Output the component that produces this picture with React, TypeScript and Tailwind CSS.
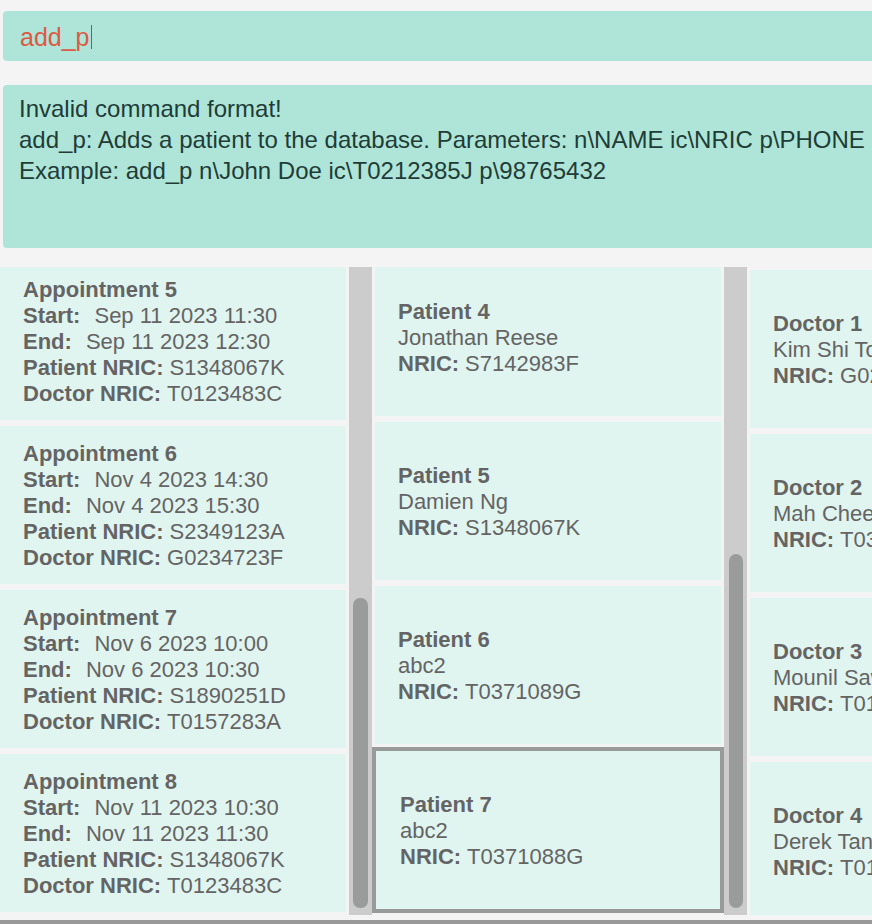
import React from "react";

type Appt = { n: number; start: string; end: string; p: string; d: string };
type Person = { title: string; name: string; nric: string; selected?: boolean };

const appts: Appt[] = [
  { n: 5, start: "Sep 11 2023 11:30", end: "Sep 11 2023 12:30", p: "S1348067K", d: "T0123483C" },
  { n: 6, start: "Nov 4 2023 14:30", end: "Nov 4 2023 15:30", p: "S2349123A", d: "G0234723F" },
  { n: 7, start: "Nov 6 2023 10:00", end: "Nov 6 2023 10:30", p: "S1890251D", d: "T0157283A" },
  { n: 8, start: "Nov 11 2023 10:30", end: "Nov 11 2023 11:30", p: "S1348067K", d: "T0123483C" },
];

const patients: Person[] = [
  { title: "Patient 4", name: "Jonathan Reese", nric: "S7142983F" },
  { title: "Patient 5", name: "Damien Ng", nric: "S1348067K" },
  { title: "Patient 6", name: "abc2", nric: "T0371089G" },
  { title: "Patient 7", name: "abc2", nric: "T0371088G", selected: true },
];

const doctors: Person[] = [
  { title: "Doctor 1", name: "Kim Shi Tong", nric: "G0234723F" },
  { title: "Doctor 2", name: "Mah Chee Hong", nric: "T0345678B" },
  { title: "Doctor 3", name: "Mounil Sawhney", nric: "T0123483C" },
  { title: "Doctor 4", name: "Derek Tan", nric: "T0157283A" },
];

const cardText = "text-[22px] leading-[26px] text-[#646464] whitespace-nowrap";

function ApptCell({ a }: { a: Appt }) {
  return (
    <div className="h-[164px] w-[352px] shrink-0 p-[3px]">
      <div className={`h-full bg-[#e1f5f0] flex flex-col justify-center pl-[23px] pt-[2px] ${cardText}`}>
        <div className="font-bold">Appointment {a.n}</div>
        <div>
          <span className="font-bold">Start:</span>
          <span className="ml-[14px]">{a.start}</span>
        </div>
        <div>
          <span className="font-bold">End:</span>
          <span className="ml-[14px]">{a.end}</span>
        </div>
        <div>
          <span className="font-bold">Patient NRIC:</span>
          <span className="ml-[6px]">{a.p}</span>
        </div>
        <div>
          <span className="font-bold">Doctor NRIC:</span>
          <span className="ml-[6px]">{a.d}</span>
        </div>
      </div>
    </div>
  );
}

function PersonCell({ p }: { p: Person }) {
  const inner = (
    <>
      <div className="font-bold">{p.title}</div>
      <div>{p.name}</div>
      <div>
        <span className="font-bold">NRIC:</span>
        <span className="ml-[6px]">{p.nric}</span>
      </div>
    </>
  );
  if (p.selected) {
    return (
      <div className="h-[166px] w-[352px] shrink-0 border-[4px] border-[#999b9a]">
        <div className={`h-full bg-[#e1f5f0] flex flex-col justify-center pl-[24px] pt-[2px] ${cardText}`}>{inner}</div>
      </div>
    );
  }
  return (
    <div className="h-[164px] w-[352px] shrink-0 p-[3px]">
      <div className={`h-full bg-[#e1f5f0] flex flex-col justify-center pl-[23px] pt-[2px] ${cardText}`}>{inner}</div>
    </div>
  );
}

function ScrollBar({ top, height, left, width }: { top: string; height: string; left: string; width: string }) {
  return (
    <div className="w-[23px] shrink-0 bg-[#cccccc] flex flex-col">
      <div className={top} />
      <div className={`${height} ${left} ${width} rounded-[7px] bg-[#999c9a]`} />
    </div>
  );
}

export default function App() {
  return (
    <div
      className="w-[872px] h-[924px] bg-[#f4f4f4] overflow-hidden flex flex-col"
      style={{ fontFamily: '"Liberation Sans", Arial, sans-serif' }}
    >
      <div className="mt-[11px] ml-[3px] w-[900px] h-[50px] shrink-0 rounded-[4px] bg-[#aee5d8] flex items-center pl-[17px] pt-[2px]">
        <span className="text-[25px] text-[#dc5a43] leading-none">add_p</span>
        <span className="ml-[1px] inline-block w-[1px] h-[24px] bg-[#b5483a]" />
      </div>

      <div className="mt-[24px] ml-[3px] w-[900px] h-[163px] shrink-0 rounded-[4px] bg-[#aee5d8] pt-[8px] pl-[16px] text-[24px] leading-[31px] text-[#1f3c37] whitespace-nowrap">
        <div>Invalid command format!</div>
        <div>add_p: Adds a patient to the database. Parameters: n\NAME ic\NRIC p\PHONE</div>
        <div>Example: add_p n\John Doe ic\T0212385J p\98765432</div>
      </div>

      <div className="mt-[19px] h-[648px] shrink-0 flex">
        <div className="w-[349px] shrink-0 overflow-hidden">
          <div className="-ml-[3px] -mt-[8px] flex flex-col">
            {appts.map((a) => (
              <ApptCell key={a.n} a={a} />
            ))}
          </div>
        </div>
        <ScrollBar top="h-[331px]" height="h-[310px]" left="ml-[4px]" width="w-[15px]" />
        <div className="w-[352px] shrink-0 overflow-hidden">
          <div className="-mt-[12px] flex flex-col">
            {patients.map((p) => (
              <PersonCell key={p.title} p={p} />
            ))}
          </div>
        </div>
        <ScrollBar top="h-[287px]" height="h-[354px]" left="ml-[5px]" width="w-[14px]" />
        <div className="flex-1 overflow-hidden">
          <div className="flex flex-col">
            {doctors.map((p) => (
              <PersonCell key={p.title} p={p} />
            ))}
          </div>
        </div>
      </div>

      <div className="h-[5px] shrink-0" />
      <div className="h-[4px] shrink-0 bg-[#999999]" />
    </div>
  );
}
